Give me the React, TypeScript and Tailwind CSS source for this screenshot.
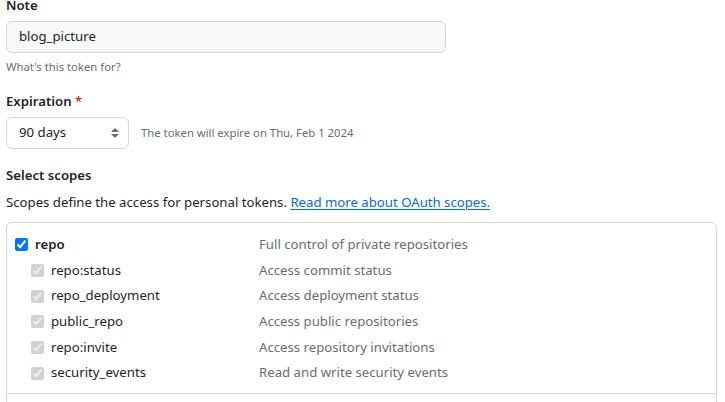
import React from "react";

const FONT = "font-['Noto_Sans',sans-serif]";

interface Scope {
  name: string;
  description: string;
}

const repoScopes: Scope[] = [
  { name: "repo:status", description: "Access commit status" },
  { name: "repo_deployment", description: "Access deployment status" },
  { name: "public_repo", description: "Access public repositories" },
  { name: "repo:invite", description: "Access repository invitations" },
  { name: "security_events", description: "Read and write security events" },
];

const UpDownIcon = () => (
  <svg width="16" height="16" viewBox="0 0 16 16" fill="#656d76">
    <path d="M4.427 9.427l3.396 3.396a.25.25 0 00.354 0l3.396-3.396A.25.25 0 0011.396 9H4.604a.25.25 0 00-.177.427zM4.427 6.573l3.396-3.396a.25.25 0 01.354 0l3.396 3.396A.25.25 0 0111.396 7H4.604a.25.25 0 01-.177-.427z" />
  </svg>
);

export default function App() {
  return (
    <div className={`${FONT} w-[725px] h-[402px] overflow-hidden bg-white text-[#1f2328]`}>
      <div className="pl-[6px] w-[717px] -mt-[5px]">
        {/* Note */}
        <label className="block text-[13.2px] leading-[21px] font-semibold">Note</label>
        <div className="mt-[5px] w-[440px] h-[32px] flex items-center px-[12px] rounded-[6px] border border-[#d0d7de] bg-[#f6f8fa] text-[13.2px]">
          blog_picture
        </div>
        <p className="mt-[5px] text-[11.3px] leading-[18px] text-[#656d76]">What's this token for?</p>

        {/* Expiration */}
        <label className="mt-[15px] block text-[13.2px] leading-[21px] font-semibold">
          Expiration <span className="text-[#d1242f]">*</span>
        </label>
        <div className="mt-[5px] flex items-center gap-[12px]">
          <div className="w-[123px] h-[32px] flex items-center justify-between pl-[12px] pr-[5px] rounded-[6px] border border-[#d0d7de] bg-white text-[13.2px]">
            <span>90 days</span>
            <UpDownIcon />
          </div>
          <span className="text-[11.3px] text-[#656d76]">The token will expire on Thu, Feb 1 2024</span>
        </div>

        {/* Scopes */}
        <h3 className="mt-[16px] text-[13.2px] leading-[21px] font-semibold">Select scopes</h3>
        <p className="mt-[6px] text-[13.2px] leading-[21px]">
          Scopes define the access for personal tokens.{" "}
          <a className="text-[#0969da] underline underline-offset-2">Read more about OAuth scopes.</a>
        </p>

        <div className="mt-[9px] w-[711px] rounded-[6px] border border-[#d0d7de]">
          <div className="pt-[9px] pb-[7px] px-[8px]">
            <div className="flex items-center h-[26px] text-[13.2px]">
              <div className="w-[244px] flex items-center gap-[7px]">
                <input type="checkbox" checked readOnly className="w-[13px] h-[13px] m-0" />
                <span className="font-semibold">repo</span>
              </div>
              <span className="text-[#656d76]">Full control of private repositories</span>
            </div>
            {repoScopes.map((scope) => (
              <div key={scope.name} className="flex items-center h-[25.6px] text-[13.2px]">
                <div className="w-[244px] flex items-center gap-[7px] pl-[16px]">
                  <input type="checkbox" checked disabled readOnly className="w-[13px] h-[13px] m-0" />
                  <span>{scope.name}</span>
                </div>
                <span className="text-[#656d76]">{scope.description}</span>
              </div>
            ))}
          </div>
          <div className="border-t border-[#d0d7de] h-[40px]" />
        </div>
      </div>
    </div>
  );
}
